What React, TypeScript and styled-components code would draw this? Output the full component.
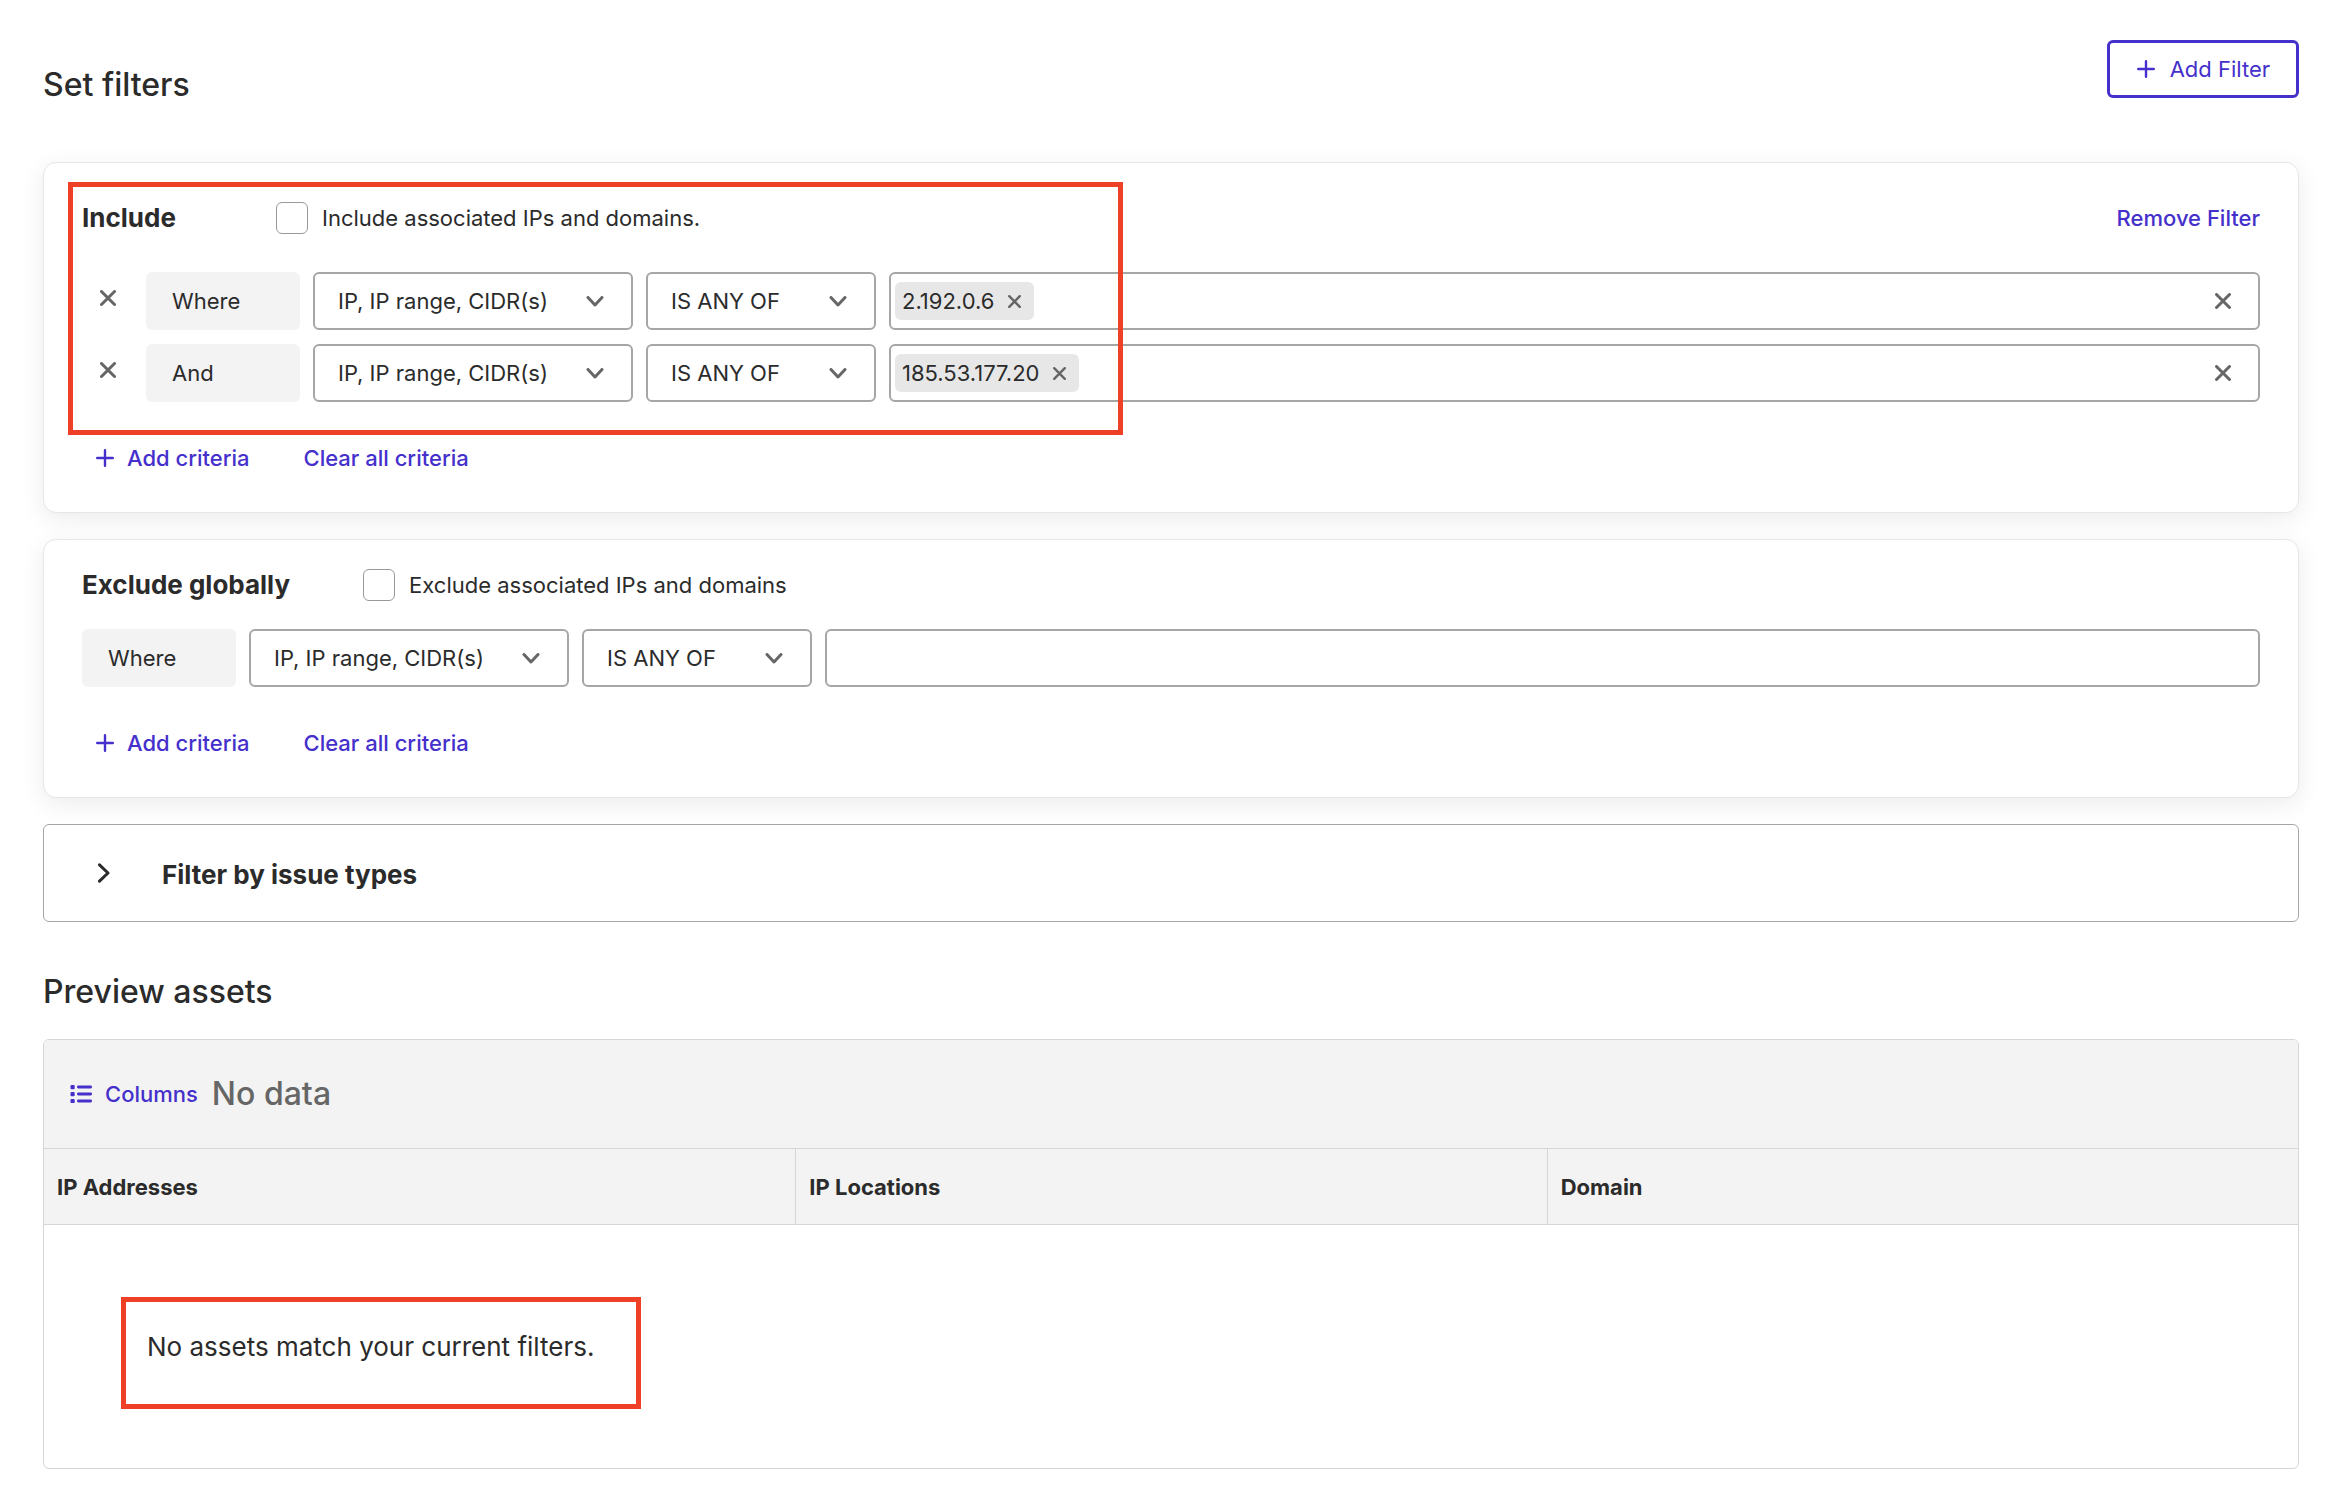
import React, { useId, useState } from "react";
import styled, { createGlobalStyle } from "styled-components";

const ink = "#2b2b2b";
const accent = "#4530cc";
const muted = "#666666";
const line = "#a6a6a6";
const hairline = "#d6d6d6";
const surface = "#f3f3f3";

const GlobalStyle = createGlobalStyle`
  *, *::before, *::after { box-sizing: border-box; }
  body {
    margin: 0;
    background: #ffffff;
    color: ${ink};
    font-family: Inter, "Noto Sans", sans-serif;
    font-size: 22px;
    line-height: 32px;
  }
  h1, h2, p { margin: 0; }
  button, select, input { font: inherit; color: inherit; }
  button { cursor: pointer; }
`;

const Page = styled.main`
  padding: 40px 51px 27px 43px;
`;

const PageHeader = styled.header`
  display: flex;
  justify-content: space-between;
  align-items: flex-start;
  padding-bottom: 57px;
`;

const Title = styled.h1`
  padding-top: 25px;
  font-size: 32px;
  line-height: 40px;
  font-weight: 500;
`;

const PreviewTitle = styled(Title).attrs({ as: "h2" })`
  padding: 50px 0 27px;
`;

const OutlineButton = styled.button`
  display: flex;
  align-items: center;
  gap: 15px;
  height: 58px;
  padding: 0 26px 0 27px;
  border: 3px solid ${accent};
  border-radius: 6px;
  background: #ffffff;
  color: ${accent};
`;

const TextButton = styled.button`
  display: flex;
  align-items: center;
  gap: 13px;
  padding: 0;
  border: 0;
  background: none;
  color: ${accent};
  font-weight: 500;
`;

const Stack = styled.div`
  display: grid;
  gap: 26px;
`;

const Card = styled.section`
  position: relative;
  padding: 29px 38px 38px;
  border: 1px solid #e6e6e6;
  border-radius: 13px;
  background: #ffffff;
  box-shadow: 0 6px 24px rgba(0, 0, 0, 0.08);
`;

const CardHead = styled.div`
  display: flex;
  align-items: center;
  gap: 73px;
  margin-bottom: 28px;

  & > button {
    height: 52px;
    margin-left: auto;
  }
`;

const CardTitle = styled.h2`
  min-width: 121px;
  font-size: 26px;
  line-height: 32px;
  font-weight: 700;
`;

const CheckLabel = styled.label`
  display: flex;
  align-items: center;
  gap: 14px;
`;

const Checkbox = styled.input.attrs({ type: "checkbox" })`
  appearance: none;
  width: 32px;
  height: 32px;
  margin: 0;
  border: 1px solid #999999;
  border-radius: 6px;
  background: #ffffff;

  &:checked {
    border-color: ${accent};
    background: ${accent};
  }
`;

const Rows = styled.div`
  display: grid;
  gap: 12px;
`;

const Row = styled.div`
  display: flex;
  align-items: flex-start;
  gap: 13px;
  height: 60px;
`;

const RemoveRow = styled.button`
  display: grid;
  place-items: center;
  width: 51px;
  height: 52px;
  padding: 0;
  border: 0;
  background: none;
  color: ${muted};
`;

const Joiner = styled.span`
  width: 154px;
  padding: 13px 26px;
  border-radius: 6px;
  background: ${surface};
`;

const SelectBox = styled.span<{ $width: number }>`
  position: relative;
  width: ${(p) => p.$width}px;
  flex: none;

  svg {
    position: absolute;
    top: 24px;
    right: 29px;
    color: ${muted};
    pointer-events: none;
  }
`;

const Select = styled.select`
  appearance: none;
  display: block;
  width: 100%;
  height: 58px;
  padding: 0 23px;
  border: 2px solid ${line};
  border-radius: 6px;
  background: #ffffff;
`;

const ValueBox = styled.div`
  display: flex;
  align-items: center;
  flex: 1;
  min-width: 0;
  height: 58px;
  padding: 0 27px 0 4px;
  border: 2px solid ${line};
  border-radius: 6px;
`;

const ValueInput = styled.input`
  flex: 1;
  min-width: 0;
  height: 40px;
  padding: 0 8px;
  border: 0;
  outline: 0;
  background: none;
`;

const Chip = styled.span`
  display: flex;
  align-items: center;
  gap: 14px;
  height: 38px;
  padding: 0 13px 0 7px;
  border-radius: 6px;
  background: #e7e7e7;
`;

const IconButton = styled.button`
  display: grid;
  place-items: center;
  padding: 0;
  border: 0;
  background: none;
  color: ${muted};
`;

const Actions = styled.div`
  display: flex;
  gap: 54px;
  margin-top: 38px;
  padding-left: 14px;
`;

const Callout = styled.span`
  position: absolute;
  border: 5px solid #ee4026;
  pointer-events: none;
`;

const CriteriaCallout = styled(Callout)`
  top: 19px;
  left: 24px;
  width: 1055px;
  height: 253px;
`;

const MessageCallout = styled(Callout)`
  top: -34px;
  left: -26px;
  width: 520px;
  height: 112px;
`;

const Disclosure = styled.button`
  display: flex;
  align-items: center;
  gap: 51px;
  width: 100%;
  height: 98px;
  padding: 4px 53px 0;
  border: 1px solid ${line};
  border-radius: 6px;
  background: #ffffff;
  font-size: 26px;
  font-weight: 700;

  svg {
    margin-bottom: 4px;
  }
`;

const Panel = styled.section`
  overflow: hidden;
  border: 1px solid ${hairline};
  border-radius: 6px;
`;

const Toolbar = styled.div`
  display: flex;
  align-items: center;
  gap: 14px;
  height: 109px;
  padding: 0 26px;
  border-bottom: 1px solid ${hairline};
  background: ${surface};
`;

const Status = styled.span`
  color: ${muted};
  font-size: 32px;
  line-height: 40px;
  font-weight: 500;
`;

const Table = styled.table`
  width: 100%;
  border-spacing: 0;
  table-layout: fixed;
`;

const HeadCell = styled.th`
  height: 76px;
  padding: 0 13px;
  border-bottom: 1px solid ${hairline};
  background: ${surface};
  text-align: left;
  font-weight: 700;

  & + & {
    border-left: 1px solid ${hairline};
  }
`;

const EmptyCell = styled.td`
  padding: 106px 103px 105px;
`;

const EmptyMessage = styled.p`
  position: relative;
  font-size: 26px;
  line-height: 32px;
`;

const Plus = () => (
  <svg width="18" height="18" viewBox="0 0 18 18" fill="none" stroke="currentColor" strokeWidth="2.4" strokeLinecap="round" aria-hidden="true">
    <path d="M9 1.2v15.6M1.2 9h15.6" />
  </svg>
);

const Cross = ({ size = 16 }: { size?: number }) => (
  <svg width={size} height={size} viewBox="0 0 16 16" fill="none" stroke="currentColor" strokeWidth="3" strokeLinecap="round" aria-hidden="true">
    <path d="M1.5 1.5l13 13M14.5 1.5l-13 13" />
  </svg>
);

const ChevronDown = () => (
  <svg width="18" height="11" viewBox="0 0 18 11" fill="none" stroke="currentColor" strokeWidth="3" strokeLinecap="round" strokeLinejoin="round" aria-hidden="true">
    <path d="M2 1.5l7 7.5 7-7.5" />
  </svg>
);

const ChevronRight = () => (
  <svg width="14" height="20" viewBox="0 0 14 20" fill="none" stroke="currentColor" strokeWidth="3" strokeLinecap="round" strokeLinejoin="round" aria-hidden="true">
    <path d="M2.5 1.8l8.5 8.2-8.5 8.2" />
  </svg>
);

const ListIcon = () => (
  <svg width="22" height="18" viewBox="0 0 22 18" fill="currentColor" aria-hidden="true">
    {[0, 7, 14].map((y) => (
      <g key={y}>
        <rect x="0.5" y={y} width="4.2" height="4.2" rx="1" />
        <rect x="7" y={y + 0.6} width="15" height="2.8" rx="1.3" />
      </g>
    ))}
  </svg>
);

type CriterionProps = { joiner: string; value?: string; removable?: boolean };

function Criterion({ joiner, value, removable }: CriterionProps) {
  return (
    <Row>
      {removable && (
        <RemoveRow type="button" aria-label="Remove criterion">
          <Cross />
        </RemoveRow>
      )}
      <Joiner>{joiner}</Joiner>
      <SelectBox $width={320}>
        <Select aria-label="Field">
          <option>IP, IP range, CIDR(s)</option>
        </Select>
        <ChevronDown />
      </SelectBox>
      <SelectBox $width={230}>
        <Select aria-label="Operator">
          <option>IS ANY OF</option>
        </Select>
        <ChevronDown />
      </SelectBox>
      <ValueBox>
        {value && (
          <Chip>
            {value}
            <IconButton type="button" aria-label={`Remove ${value}`}>
              <Cross size={13} />
            </IconButton>
          </Chip>
        )}
        <ValueInput aria-label="Values" />
        {value && (
          <IconButton type="button" aria-label="Clear values">
            <Cross />
          </IconButton>
        )}
      </ValueBox>
    </Row>
  );
}

type FilterCardProps = {
  title: string;
  checkLabel: string;
  action?: React.ReactNode;
  children: React.ReactNode;
};

function FilterCard({ title, checkLabel, action, children }: FilterCardProps) {
  const id = useId();
  return (
    <Card>
      <CardHead>
        <CardTitle>{title}</CardTitle>
        <CheckLabel htmlFor={id}>
          <Checkbox id={id} />
          {checkLabel}
        </CheckLabel>
        {action}
      </CardHead>
      <Rows>{children}</Rows>
      <Actions>
        <TextButton type="button">
          <Plus />
          Add criteria
        </TextButton>
        <TextButton type="button">Clear all criteria</TextButton>
      </Actions>
    </Card>
  );
}

export default function App() {
  const [open, setOpen] = useState(false);
  return (
    <>
      <GlobalStyle />
      <Page>
        <PageHeader>
          <Title>Set filters</Title>
          <OutlineButton type="button">
            <Plus />
            Add Filter
          </OutlineButton>
        </PageHeader>
        <Stack>
          <FilterCard
            title="Include"
            checkLabel="Include associated IPs and domains."
            action={<TextButton type="button">Remove Filter</TextButton>}
          >
            <Criterion joiner="Where" value="2.192.0.6" removable />
            <Criterion joiner="And" value="185.53.177.20" removable />
            <CriteriaCallout />
          </FilterCard>
          <FilterCard title="Exclude globally" checkLabel="Exclude associated IPs and domains">
            <Criterion joiner="Where" />
          </FilterCard>
          <Disclosure type="button" aria-expanded={open} onClick={() => setOpen(!open)}>
            <ChevronRight />
            Filter by issue types
          </Disclosure>
        </Stack>
        <PreviewTitle>Preview assets</PreviewTitle>
        <Panel>
          <Toolbar>
            <TextButton type="button">
              <ListIcon />
              Columns
            </TextButton>
            <Status>No data</Status>
          </Toolbar>
          <Table>
            <thead>
              <tr>
                <HeadCell>IP Addresses</HeadCell>
                <HeadCell>IP Locations</HeadCell>
                <HeadCell>Domain</HeadCell>
              </tr>
            </thead>
            <tbody>
              <tr>
                <EmptyCell colSpan={3}>
                  <EmptyMessage>
                    No assets match your current filters.
                    <MessageCallout />
                  </EmptyMessage>
                </EmptyCell>
              </tr>
            </tbody>
          </Table>
        </Panel>
      </Page>
    </>
  );
}
